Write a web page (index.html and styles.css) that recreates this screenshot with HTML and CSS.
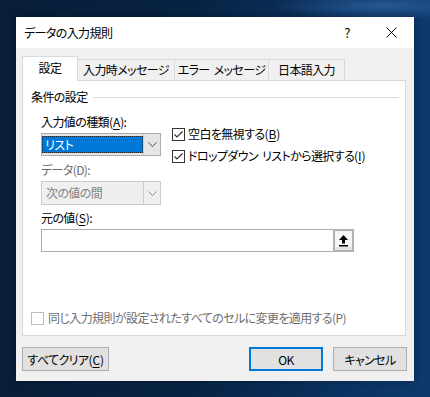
FILE: index.html
```html
<!DOCTYPE html>
<html lang="ja">
  <head>
    <meta charset="UTF-8" />
    <title>データの入力規則</title>
    <link rel="stylesheet" href="styles.css">
  </head>
  <body>
    <div class="dialog flex column">
      <div class="titlebar flex align">
        <span class="title">データの入力規則</span>
        <span class="help flex center">?</span>
        <span class="close flex center">
          <svg width="11" height="11" viewBox="0 0 11 11"><path d="M0.5 0.5 L10.5 10.5 M10.5 0.5 L0.5 10.5" stroke="#000" stroke-width="1" fill="none"/></svg>
        </span>
      </div>
      <div class="body flex column">
        <!-- タブ -->
        <div class="tabs flex">
          <div class="tab active flex center">設定</div>
          <div class="tab t2 flex center">入力時メッセージ</div>
          <div class="tab t3 flex center">エラー メッセージ</div>
          <div class="tab t4 flex center">日本語入力</div>
        </div>
        <div class="panel">
          <div class="group-title flex align">
            <span>条件の設定</span>
            <i class="rule"></i>
          </div>
          <div class="settings">
            <div class="top flex">
              <div class="col">
                <div class="label first">入力値の種類(<u>A</u>):</div>
                <div class="combo flex">
                  <div class="value"><span class="selected flex align">リスト</span></div>
                  <div class="arrow flex center">
                    <svg width="9" height="5" viewBox="0 0 9 5"><path d="M0.5 0.5 L4.5 4.5 L8.5 0.5" stroke="#555" fill="none"/></svg>
                  </div>
                </div>
                <div class="label off">データ(D):</div>
                <div class="combo disabled flex">
                  <div class="value flex align"><span>次の値の間</span></div>
                  <div class="arrow flex center">
                    <svg width="9" height="5" viewBox="0 0 9 5"><path d="M0.5 0.5 L4.5 4.5 L8.5 0.5" stroke="#8a8a8a" fill="none"/></svg>
                  </div>
                </div>
              </div>
              <div class="checks">
                <div class="check flex align">
                  <span class="box"><svg width="11" height="11" viewBox="0 0 11 11"><path d="M1.5 5.5 L4 8 L9.5 2.5" stroke="#333" stroke-width="1.2" fill="none"/></svg></span>
                  <span>空白を無視する(<u>B</u>)</span>
                </div>
                <div class="check second flex align">
                  <span class="box"><svg width="11" height="11" viewBox="0 0 11 11"><path d="M1.5 5.5 L4 8 L9.5 2.5" stroke="#333" stroke-width="1.2" fill="none"/></svg></span>
                  <span>ドロップダウン リストから選択する(<u>I</u>)</span>
                </div>
              </div>
            </div>
            <div class="label source-label">元の値(<u>S</u>):</div>
            <div class="source flex">
              <div class="field"></div>
              <div class="pick flex center">
                <svg width="9" height="12" viewBox="0 0 9 12"><path d="M4.5 0 L9 5 H6 V8.5 H3 V5 H0 Z" fill="#000"/><rect x="0" y="10" width="9" height="1.5" fill="#000"/></svg>
              </div>
            </div>
          </div>
          <div class="check apply flex align">
            <span class="box"></span>
            <span>同じ入力規則が設定されたすべてのセルに変更を適用する(P)</span>
          </div>
        </div>
        <div class="actions flex">
          <button class="btn clear">すべてクリア(<u>C</u>)</button>
          <span class="spacer"></span>
          <button class="btn default">OK</button>
          <button class="btn cancel">キャンセル</button>
        </div>
      </div>
    </div>
  </body>
</html>
```

FILE: styles.css
```css
* {
  margin: 0;
  padding: 0;
  box-sizing: border-box;
}
body {
  width: 430px;
  height: 397px;
  overflow: hidden;
  font-family: "Noto Sans CJK JP", "Noto Sans", sans-serif;
  font-feature-settings: "palt";
  font-size: 12px;
  line-height: 16px;
  letter-spacing: -0.6px;
  word-spacing: 2px;
  color: #000;
  background:
    radial-gradient(ellipse 110px 14px at 380px 6px, rgba(70, 130, 200, 0.45), transparent),
    linear-gradient(90deg, #081d37 0%, #072343 45%, #0b3261 80%, #0d3a6c 100%);
}
.flex {
  display: flex;
}
.column {
  flex-direction: column;
}
.align {
  align-items: center;
}
.center {
  justify-content: center;
  align-items: center;
}
u {
  text-underline-offset: 2px;
  padding: 0 0.5px;
}

.dialog {
  margin: 17px 0 0 16px;
  width: 398px;
  height: 364px;
  background-color: #f0f0f0;
  box-shadow: 0 0 6px rgba(0, 0, 0, 0.3);
}

/* タイトルバー */
.titlebar {
  height: 31px;
  background-color: #fff;
  padding-left: 8px;
}
.titlebar .title {
  flex: 1;
}
.titlebar .help {
  width: 42px;
  height: 31px;
  font-size: 13px;
}
.titlebar .close {
  width: 46px;
  height: 31px;
}

.body {
  flex: 1;
  padding: 8px 7px 0 6px;
}

/* タブ */
.tabs {
  height: 24px;
  align-items: flex-end;
}
.tab {
  height: 21px;
  border: 1px solid #d9d9d9;
  border-bottom: none;
  background-color: #f0f0f0;
  margin-left: -1px;
  white-space: nowrap;
}
.tab.active {
  width: 56px;
  height: 25px;
  margin-left: 0;
  margin-bottom: -1px;
  background-color: #fff;
  position: relative;
  z-index: 1;
  padding-bottom: 3px;
}
.tab.t2 {
  width: 98px;
}
.tab.t3 {
  width: 95px;
}
.tab.t4 {
  width: 77px;
}

.panel {
  width: 384px;
  height: 256px;
  background-color: #fff;
  border: 1px solid #d9d9d9;
  padding: 8px 0 0 8px;
}
.group-title {
  height: 16px;
  margin-right: 6px;
}
.group-title .rule {
  flex: 1;
  height: 1px;
  margin-left: 5px;
  background-color: #dcdcdc;
}

.settings {
  margin-left: 10px;
}
.label {
  height: 16px;
  white-space: nowrap;
}
.label.first {
  margin-top: 9px;
}
.label.off {
  margin-top: 6px;
  color: #6d6d6d;
}
.col {
  width: 120px;
}

.combo {
  margin-top: 3px;
  width: 120px;
  height: 23px;
  border: 1px solid #adadad;
  background-color: #e5e5e5;
}
.combo .value {
  flex: 1;
  padding: 2px 0 2px 0;
}
.combo .selected {
  height: 100%;
  padding-left: 3px;
  background-color: #0078d7;
  color: #fff;
  outline: 1px dotted #222;
  outline-offset: -1px;
}
.combo .arrow {
  width: 17px;
  border-left: 1px solid #d0d0d0;
}
.combo.disabled {
  height: 24px;
  border-color: #cccccc;
  background-color: #efefef;
  color: #838383;
}
.combo.disabled .value {
  padding-left: 4px;
}
.combo.disabled .arrow {
  border-left-color: #cccccc;
}

.checks {
  margin-left: 11px;
  padding-top: 21px;
}
.check {
  height: 16px;
  white-space: nowrap;
}
.check.second {
  margin-top: 6px;
}
.check .box {
  width: 13px;
  height: 13px;
  border: 1px solid #333;
  background-color: #fff;
  margin-right: 3px;
  display: flex;
}

.source-label {
  margin-top: 5px;
}
.source {
  margin-top: 3px;
  height: 23px;
}
.source .field {
  width: 292px;
  border: 1px solid #adadad;
  border-right: none;
}
.source .pick {
  width: 21px;
  border: 2px solid #b2b2b2;
  background-color: #f6f6f6;
  box-shadow: inset 0 -3px 0 #e3e3e3;
}

.check.apply {
  margin-top: 58px;
  color: #6d6d6d;
}
.check.apply .box {
  border-color: #bcbcbc;
  margin-right: 4px;
}

/* ボタン */
.actions {
  margin-top: 11px;
  height: 24px;
}
.actions .spacer {
  flex: 1;
}
.btn {
  height: 24px;
  border: 1px solid #adadad;
  background-color: #e1e1e1;
  font-family: inherit;
  font-feature-settings: "palt";
  font-size: 12px;
  letter-spacing: -0.6px;
  color: #000;
}
.btn.clear {
  width: 87px;
}
.btn.default {
  width: 74px;
  border: 2px solid #0078d7;
}
.btn.cancel {
  width: 74px;
  margin-left: 10px;
}
```
